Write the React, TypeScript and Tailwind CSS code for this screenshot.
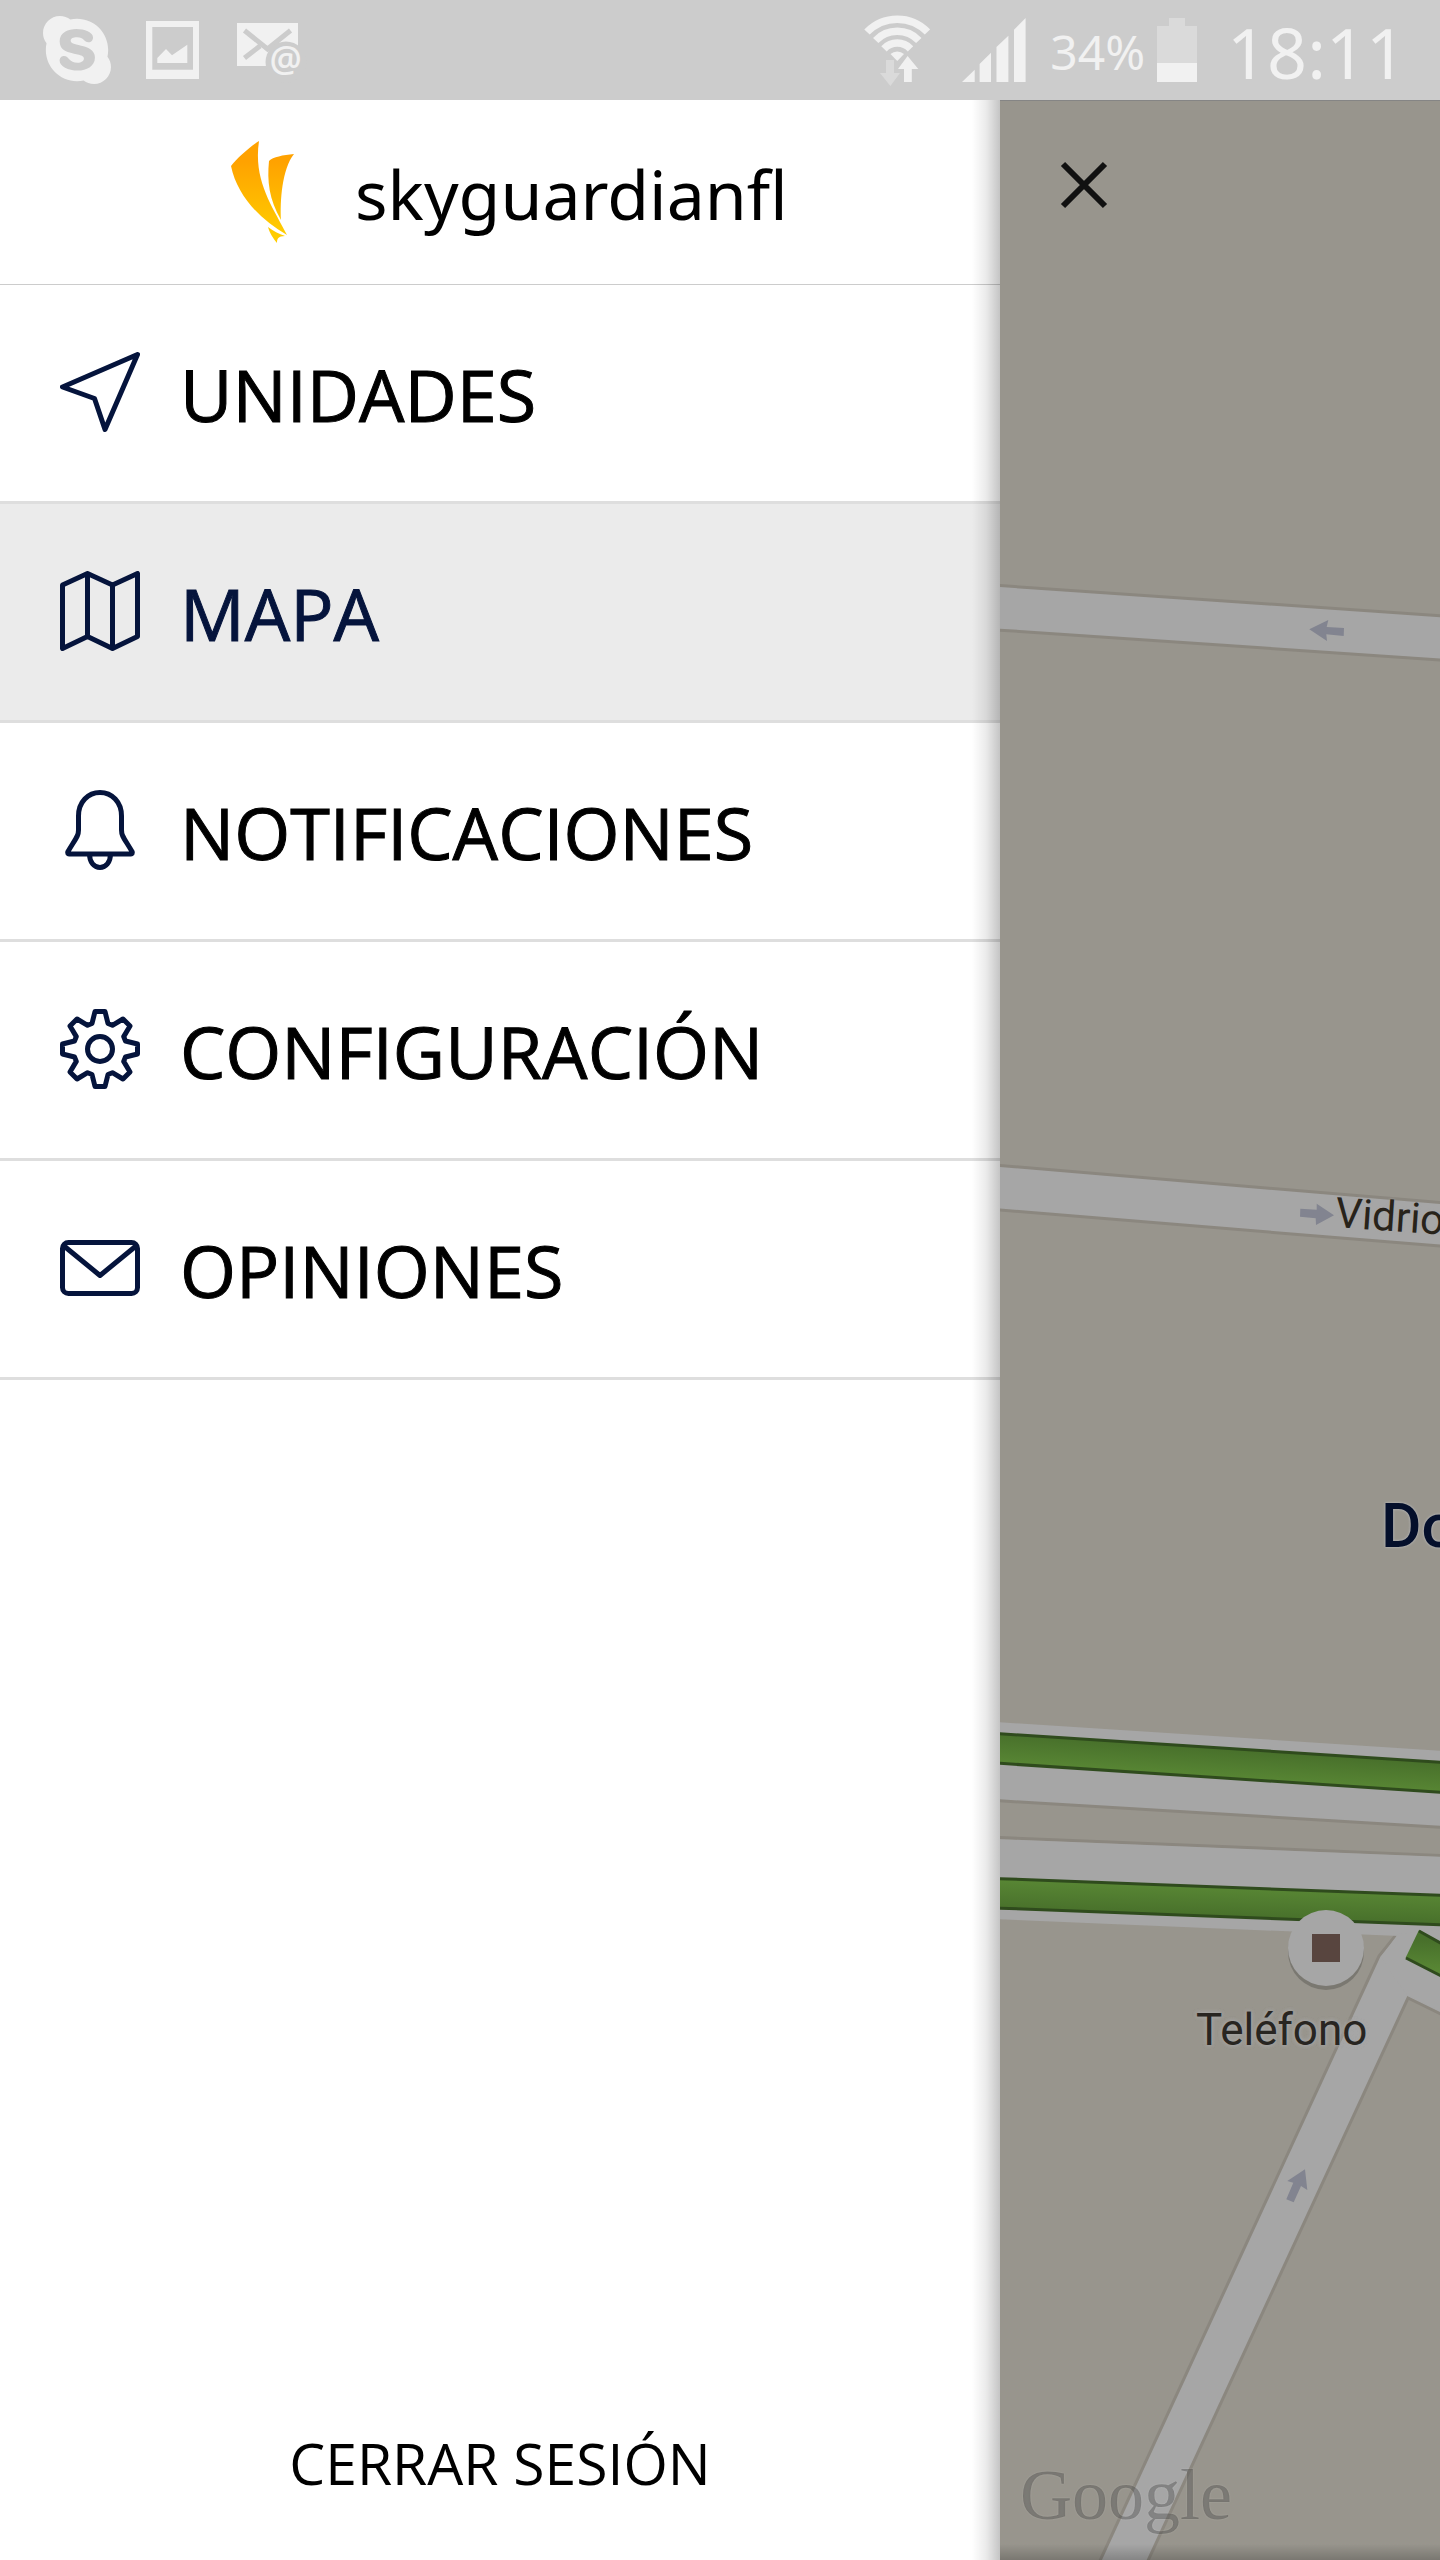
import type { ReactNode } from "react"
import { FaSkype } from "react-icons/fa"

const MENU: { label: string; active?: boolean; icon: ReactNode }[] = [
  {
    label: "UNIDADES",
    icon: <path d="M77.5 2.5L2.5 35L34.5 46.5L45 77.5Z" />,
  },
  {
    label: "MAPA",
    active: true,
    icon: (
      <path d="M2.5 14L27.5 2.5L52.5 14L77.5 2.5V65.5L52.5 77.5L27.5 65.5L2.5 77.5ZM27.5 2.5V65.5M52.5 14V77.5" />
    ),
  },
  {
    label: "NOTIFICACIONES",
    icon: (
      <path d="M18.5 26C18.5 12 28 2.5 40 2.5S61.5 12 61.5 26V40C61.5 46 64 48 72 61.5C73 63 72 64 71 64H9C8 64 7 63 8 61.5C16 48 18.5 46 18.5 40ZM29.5 64C29.5 72 34 77.5 40 77.5S50.5 72 50.5 64" />
    ),
  },
  {
    label: "CONFIGURACIÓN",
    icon: (
      <>
        <path d="M32 14.5L35 2.5H45L48 14.5L52.4 16.3L63 10L70 17L63.7 27.6L65.5 32L77.5 35V45L65.5 48L63.7 52.4L70 63L63 70L52.4 63.7L48 65.5L45 77.5H35L32 65.5L27.6 63.7L17 70L10 63L16.3 52.4L14.5 48L2.5 45V35L14.5 32L16.3 27.6L10 17L17 10L27.6 16.3Z" />
        <circle cx="40" cy="40" r="12.5" />
      </>
    ),
  },
  {
    label: "OPINIONES",
    icon: (
      <>
        <rect x="2.5" y="14.5" width="75" height="51" rx="6" />
        <path d="M4 18L40 47.5L76 18" />
      </>
    ),
  },
]

function StatusBar() {
  return (
    <header className="flex h-[100px] items-center justify-between bg-[#cccccc] pr-[34px] pl-[43px] text-[#f1f1f1]">
      <div className="flex items-center">
        <FaSkype className="mr-[35px] h-[78px] w-[68px]" />
        <svg viewBox="0 0 53 58" className="mr-[38px] h-[58px] w-[53px]" fill="currentColor">
          <path fillRule="evenodd" d="M0 0H53V58H0ZM6.3 6V48.7H47V6Z" />
          <path d="M11.3 42V37L20 28L26 34.3L41.3 23.7V42Z" />
        </svg>
        <svg viewBox="0 0 64 54" className="h-[54px] w-16 overflow-visible" fill="currentColor">
          <path d="M0 0H61V43H0Z" />
          <path d="M7.5 7.5L30.5 26L53.5 7.5M7.5 35L23 23" fill="none" stroke="#ccc" strokeWidth="5" />
          <circle cx="49" cy="39" r="20.5" fill="#ccc" />
          <text x="32.5" y="49" fontSize="36" fontWeight="600" fontFamily="Open Sans, sans-serif">
            @
          </text>
        </svg>
      </div>
      <div className="flex items-center">
        <svg viewBox="0 0 66 71" className="mr-8 h-[71px] w-[66px]" fill="currentColor">
          <g fill="none" stroke="currentColor" strokeWidth="7.5">
            <path d="M3 17A42 42 0 0 1 63.5 17" />
            <path d="M11.7 25.5A30 30 0 0 1 54.8 25.5" />
            <path d="M20 33.8A18.3 18.3 0 0 1 46.5 33.8" />
          </g>
          <path d="M26.5 39A10 10 0 0 1 40 39L33.3 46Z" />
          <path d="M22 45H30V58H36L26.4 71L16 58H22Z" fill="#dadada" />
          <path d="M43.6 41L54.3 54H47.8V67H40V54H34Z" />
        </svg>
        <svg viewBox="0 0 64 64" className="mr-6 size-16" fill="currentColor">
          <path d="M0 64L12.7 51.7V64ZM17.6 64V46L29 34.7V64ZM34.5 64V29L46.4 17.7V64ZM52 64V11.7L63.6 0V64Z" />
        </svg>
        <span className="mr-3 pt-1 font-['Noto_Sans'] text-[48px] leading-none">34%</span>
        <svg viewBox="0 0 40 64" className="mr-[30px] h-16 w-10">
          <path d="M12 0H28V8H40V45H0V8H12Z" fill="#dadada" />
          <path d="M0 45H40V64H0Z" fill="#f1f1f1" />
        </svg>
        <time className="pt-1 font-['Noto_Sans'] text-[70px] leading-none">18:11</time>
      </div>
    </header>
  )
}

function Logo() {
  return (
    <svg viewBox="0 0 63 102" className="h-[102px] w-[63px]" aria-hidden="true">
      <defs>
        <linearGradient id="gold" x1="0" y1="0" x2="0" y2="102" gradientUnits="userSpaceOnUse">
          <stop offset="0.2" stopColor="#ffa200" />
          <stop offset="0.9" stopColor="#ffcc00" />
        </linearGradient>
      </defs>
      <g fill="url(#gold)">
        <path d="M28 0C20 5 6 17 0 25C6 54 28 78 56 94C42 66 22 40 28 0Z" />
        <path d="M63 13C52 14 42 16 38 20C36 40 38 58 50 79C49 60 51 28 63 13Z" />
        <path d="M37 86C39 93 42 97 46 102C46 98 47 95 54 95C48 93 42 90 37 86Z" />
      </g>
    </svg>
  )
}

function Drawer() {
  return (
    <aside className="relative flex flex-col bg-white font-['Open_Sans',sans-serif]">
      <div className="flex h-[185px] items-center gap-[61px] border-b border-[#cccccc] pl-[231px]">
        <Logo />
        <span className="pt-1 font-['Noto_Sans'] text-[68px] leading-none text-black">skyguardianfl</span>
      </div>
      <nav>
        {MENU.map((item) => (
          <a
            key={item.label}
            href="#"
            className={
              item.active
                ? "flex h-[219px] items-center gap-10 border-b-3 border-[#dedede] bg-[#ebebeb] pb-[2px] pl-[60px] text-[#05143c]"
                : "flex h-[219px] items-center gap-10 border-b-3 border-[#dedede] pb-[2px] pl-[60px] text-black"
            }
          >
            <svg
              viewBox="0 0 80 80"
              className="size-20 shrink-0"
              fill="none"
              stroke="#05143c"
              strokeWidth="5"
              strokeLinejoin="round"
              aria-hidden="true"
            >
              {item.icon}
            </svg>
            <span className="pt-1 text-[72px] leading-none [-webkit-text-stroke:1px]">{item.label}</span>
          </a>
        ))}
      </nav>
      <button type="button" className="mt-auto mb-[52px] py-4 text-center text-[57px] leading-none text-black">
        CERRAR SESIÓN
      </button>
      <div className="pointer-events-none absolute inset-y-0 right-0 w-7 bg-linear-to-r from-black/0 via-black/8 to-black/23" />
    </aside>
  )
}

function MapRoads() {
  return (
    <svg
      viewBox="0 0 440 2460"
      preserveAspectRatio="xMinYMin slice"
      className="absolute inset-0 size-full"
      aria-hidden="true"
    >
      <defs>
        <linearGradient id="trafficDown" x1="0" y1="0" x2="-0.02" y2="1">
          <stop offset="0.2" stopColor="#48702b" />
          <stop offset="0.8" stopColor="#588634" />
        </linearGradient>
        <linearGradient id="trafficA" x1="220" y1="1648" x2="218" y2="1678" gradientUnits="userSpaceOnUse">
          <stop offset="0" stopColor="#48702b" />
          <stop offset="1" stopColor="#588634" />
        </linearGradient>
        <linearGradient id="trafficB" x1="220" y1="1787" x2="219" y2="1817" gradientUnits="userSpaceOnUse">
          <stop offset="0" stopColor="#588634" />
          <stop offset="1" stopColor="#48702b" />
        </linearGradient>
      </defs>

      {/* side streets */}
      <g fill="#a6a6a6" stroke="#8b877f" strokeWidth="3">
        <path d="M-5 485.2L445 516V560.3L-5 529.8Z" />
        <path d="M-5 1065L445 1103V1146.5L-5 1109.6Z" />
        <path d="M396 1835L379 1856L98 2465H146L408 1898L445 1916V1820Z" />
      </g>

      {/* motorway, both directions */}
      <path d="M-5 1622L445 1651V1727L-5 1700Z" fill="#a6a6a6" />
      <path d="M-5 1700.5L445 1727.5M-5 1737.3L445 1755.7" stroke="#8b877f" strokeWidth="3" />
      <path d="M-5 1739L445 1757V1838L-5 1819Z" fill="#a6a6a6" />
      <path d="M398 1834L381 1857L396 1880L408 1896L441 1911V1830Z" fill="#a6a6a6" />
      <g stroke="#2f4b1d" strokeWidth="3">
        <path d="M-5 1633.5L445 1662.5V1692.5L-5 1663Z" fill="url(#trafficA)" />
        <path d="M-5 1778.5L445 1795.5V1825L-5 1808Z" fill="url(#trafficB)" />
      </g>
      <path d="M419 1830L445 1845.5V1878.5L405.5 1858Z" fill="url(#trafficDown)" />
      <path d="M419 1831L445 1845.5M406 1858L445 1878" stroke="#2f4b1d" strokeWidth="3" />

      {/* one-way arrows */}
      <g fill="#828490">
        <path d="M309.3 529.3L328.3 520L326.7 527L344 528L343.7 536L326.3 534.3L327 541Z" />
        <path d="M334 1115.3L316.7 1103.7V1109.7L300.3 1108.7L300 1116.7L315.7 1118.3L316 1125Z" />
        <path d="M305 2069.3L287.3 2081L293.3 2082.7L286.3 2099.3L293.7 2102.3L301 2086L307.3 2090Z" />
      </g>

      {/* phone booth pin */}
      <circle cx="326" cy="1852" r="38" fill="#7a7871" />
      <circle cx="326" cy="1848" r="38" fill="#a6a6a6" />
      <path d="M312 1834H340V1862H312Z" fill="#58453f" />
    </svg>
  )
}

function MapView() {
  return (
    <section className="relative overflow-hidden bg-[#98958d] font-['Roboto',sans-serif] shadow-[inset_0_1px_0_#858585]">
      <MapRoads />
      <span className="absolute top-[1092px] left-[334px] origin-bottom-left rotate-4 text-[42px] leading-none text-[#28231a] [text-shadow:0_0_3px_#a6a6a6]">
        Vidrio
      </span>
      <span className="absolute top-[1395px] left-[381px] text-[62px] leading-none font-medium text-[#040f2b] [text-shadow:0_0_3px_#b4b4b4,0_0_2px_#b4b4b4]">
        Do
      </span>
      <span className="absolute top-[1908px] left-[196px] text-[44px] leading-none text-[#282521] [text-shadow:0_0_4px_#a6a6a6,0_0_4px_#a6a6a6]">
        Teléfono
      </span>
      <span className="absolute bottom-[29px] left-5 font-['Liberation_Serif',serif] text-[72px] leading-none text-black/28 [text-shadow:0_0_2px_#ffffff30]">
        Google
      </span>
      <button type="button" aria-label="Cerrar menú" className="absolute top-[61px] left-[60px]">
        <svg viewBox="0 0 48 48" className="size-12" stroke="#111111" strokeWidth="6">
          <path d="M3 3L45 45M45 3L3 45" />
        </svg>
      </button>
      <div className="pointer-events-none absolute inset-x-0 bottom-0 h-4 bg-linear-to-b from-black/0 to-black/20" />
    </section>
  )
}

export default function App() {
  return (
    <div className="flex min-h-screen flex-col bg-white">
      <StatusBar />
      <main className="grid flex-1 grid-cols-[25fr_11fr]">
        <Drawer />
        <MapView />
      </main>
    </div>
  )
}
